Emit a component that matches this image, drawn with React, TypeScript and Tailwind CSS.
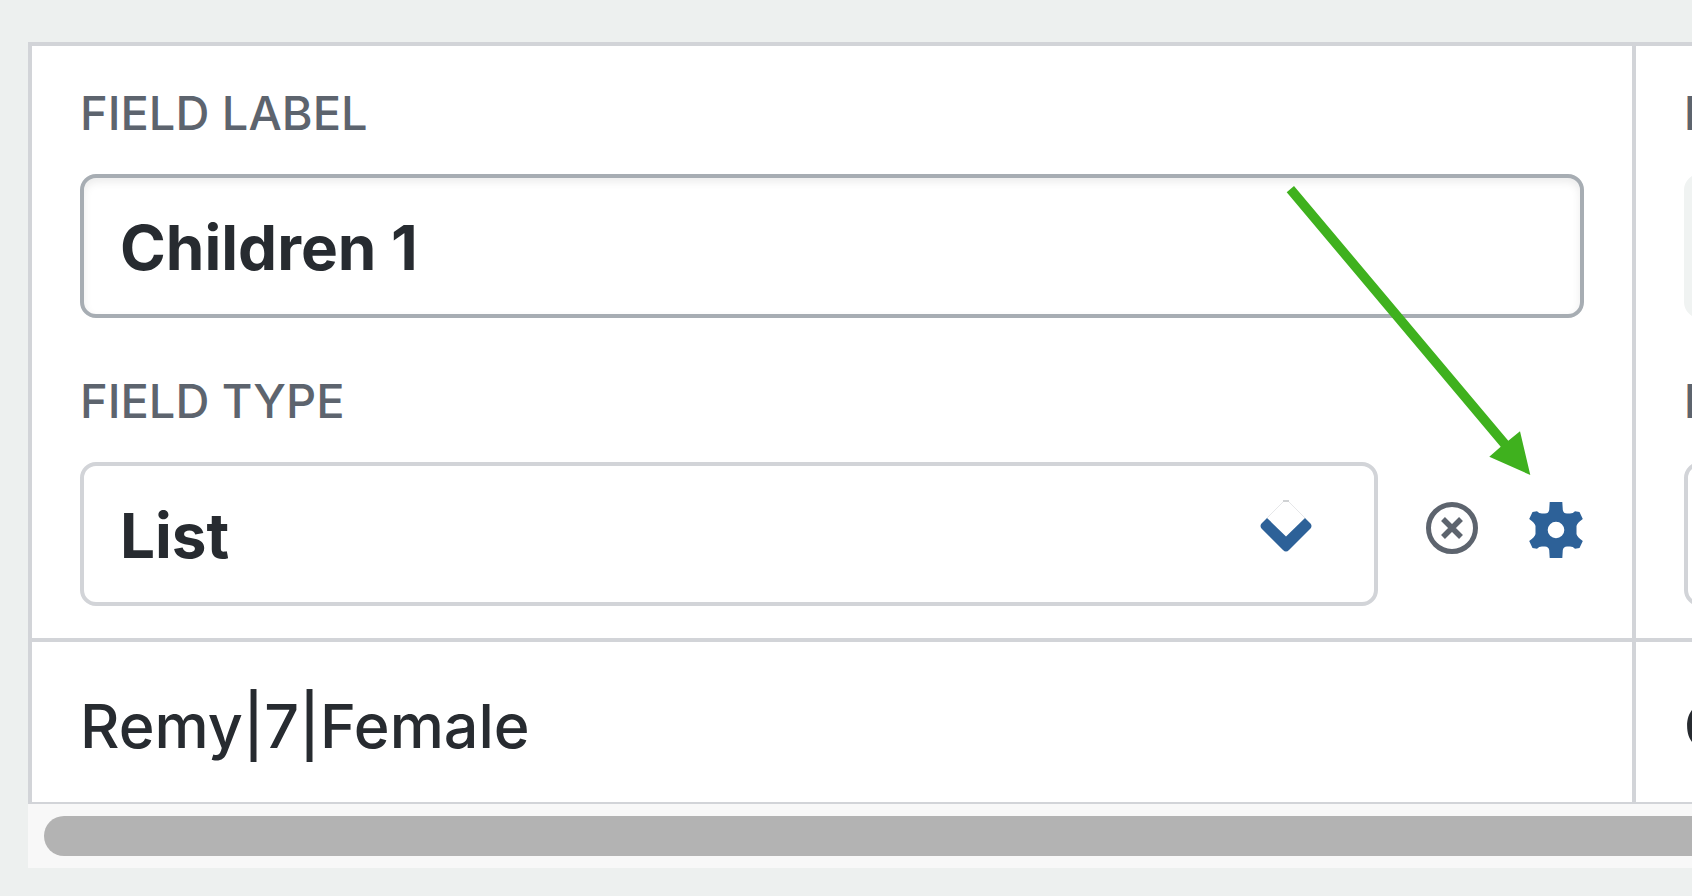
const FIELD_TYPES = ["List", "Text", "Number", "Date"];

const COLUMNS = [
  { id: "children-1", label: "Children 1", type: "List", sample: "Remy|7|Female", active: true },
  { id: "children-2", label: "C", type: "List", sample: "C", active: false },
];

function Chevron() {
  return (
    <svg viewBox="0 0 52 52" className="pointer-events-none absolute right-[66px] top-[38px] h-[52px] w-[52px]" aria-hidden="true">
      <path d="M7 18 L23 2 M29 2 L45 18" stroke="#e6e7e9" strokeWidth="1" fill="none" />
      <path d="M23 1 H29" stroke="#d0d2d4" strokeWidth="2" />
      <path
        d="M7 18 L26 36.5 L45 18 L50.5 23.5 Q52.5 26 50.5 28.5 L29 50 Q26 53 23 50 L1.5 28.5 Q-0.5 26 1.5 23.5 Z"
        fill="#2d6198"
      />
    </svg>
  );
}

function RemoveIcon() {
  return (
    <svg viewBox="0 0 54 56" className="h-14 w-[54px]" fill="none" stroke="#5d646e" aria-hidden="true">
      <circle cx="26" cy="26" r="23.5" strokeWidth="5" />
      <path d="M17 17 L35 35 M35 17 L17 35" strokeWidth="5.5" />
    </svg>
  );
}

function GearIcon() {
  return (
    <svg viewBox="0 0 56 56" className="h-14 w-14" fill="#2d6198" aria-hidden="true">
      <path
        fillRule="evenodd"
        d="M21.7 0 H34.3 L34.8 8 Q35.5 11.5 39 11.5 H42 Q45 11.5 47 9.3 L51.5 10 L54.8 17 Q49 21 48.5 24 V32 Q49 35 54.8 39 L51.5 46 L47 46.7 Q45 44.5 42 44.5 H39 Q35.5 44.5 34.8 48 L34.3 56 H21.7 L21.2 48 Q20.5 44.5 17 44.5 H14 Q11 44.5 9 46.7 L4.5 46 L1.2 39 Q7 35 7.5 32 V24 Q7 21 1.2 17 L4.5 10 L9 9.3 Q11 11.5 14 11.5 H17 Q20.5 11.5 21.2 8 Z M28 19.7 A8.3 8.3 0 1 0 28 36.3 A8.3 8.3 0 1 0 28 19.7 Z"
      />
    </svg>
  );
}

function Arrow() {
  return (
    <svg viewBox="0 0 245 290" className="pointer-events-none absolute right-[101px] top-[140px] h-[290px] w-[245px]" aria-hidden="true">
      <polygon points="0.7,6.3 8,0 222.3,254.7 234,245.3 244.3,289 203.3,270.7 214.7,260.7" fill="#3fb11e" />
    </svg>
  );
}

const labelClass = "mb-[35px] block text-[47px] font-medium leading-[53px] text-[#5d646e]";

export default function App() {
  return (
    <div className="min-h-screen overflow-hidden bg-[#edf0ef] pl-7 pt-[42px] font-['Inter',sans-serif] text-[#272b30]">
      {/* Field mapping table */}
      <table className="w-[193%] table-fixed border-separate border-spacing-0 border-l-4 border-t-4 border-[#d2d4d8] bg-white">
        <thead>
          <tr>
            {COLUMNS.map((col) => (
              <th key={col.id} className="relative border-b-4 border-r-4 border-[#d2d4d8] px-12 pb-8 pt-10 text-left align-top font-normal">
                <label htmlFor={`${col.id}-label`} className={labelClass}>
                  FIELD LABEL
                </label>
                <input
                  id={`${col.id}-label`}
                  type="text"
                  defaultValue={col.label}
                  disabled={!col.active}
                  className="mb-14 block h-36 w-full rounded-2xl border-4 border-[#a7adb3] bg-white px-9 pt-0.5 text-[62px] font-bold shadow-[inset_0_4px_8px_rgba(0,0,0,0.08)] outline-none disabled:border-[#f0f3f2] disabled:bg-[#f0f3f2] disabled:shadow-none"
                />
                <label htmlFor={`${col.id}-type`} className={labelClass}>
                  FIELD TYPE
                </label>
                <div className="flex items-start gap-12">
                  <div className="relative flex-1">
                    <select
                      id={`${col.id}-type`}
                      defaultValue={col.type}
                      className="block h-36 w-full appearance-none rounded-2xl border-4 border-[#d2d4d8] bg-white px-9 pt-0.5 text-[62px] font-bold outline-none"
                    >
                      {FIELD_TYPES.map((type) => (
                        <option key={type}>{type}</option>
                      ))}
                    </select>
                    <Chevron />
                  </div>
                  <div className="flex gap-12 pt-10">
                    <button type="button" aria-label="Clear field type">
                      <RemoveIcon />
                    </button>
                    <button type="button" aria-label="Field settings">
                      <GearIcon />
                    </button>
                  </div>
                </div>
                {col.active && <Arrow />}
              </th>
            ))}
          </tr>
        </thead>
        <tbody>
          <tr>
            {COLUMNS.map((col) => (
              <td key={col.id} className="border-b-2 border-r-4 border-[#d2d4d8] px-12 pb-9 pt-11 text-[61px] font-medium leading-[80px]">
                {col.sample}
              </td>
            ))}
          </tr>
        </tbody>
      </table>

      {/* Horizontal scroll track */}
      <div className="bg-[#f8f8f8] py-3 pl-4">
        <div className="h-10 rounded-l-full bg-[#b3b3b3]" />
      </div>
    </div>
  );
}
